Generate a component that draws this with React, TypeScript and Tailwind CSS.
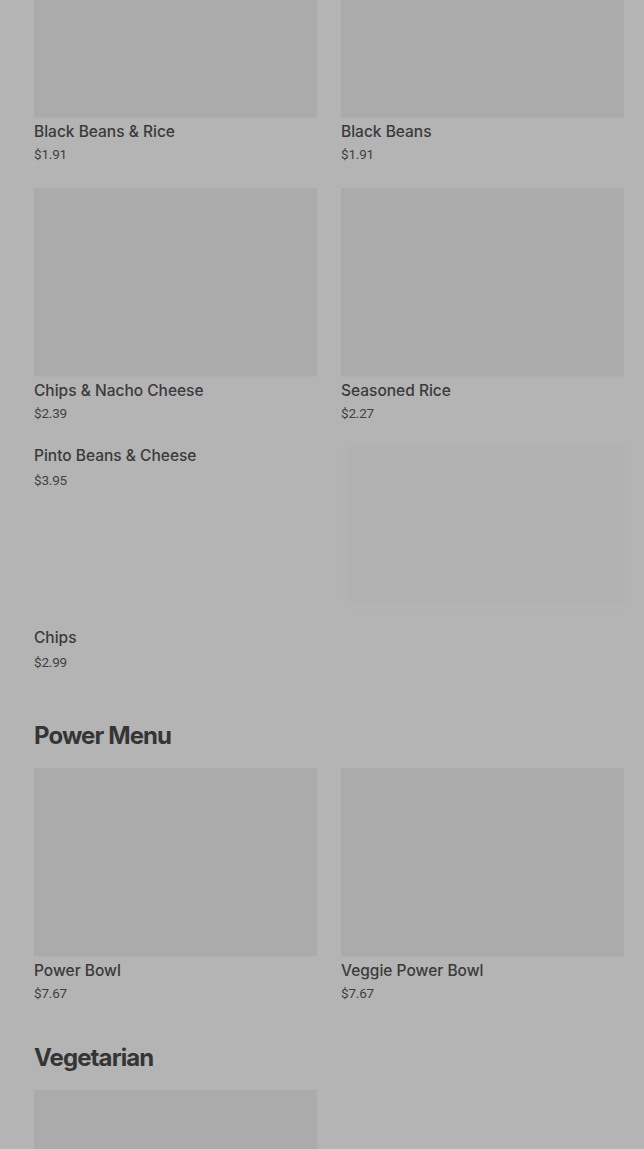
type Item = { name: string; price: string; image?: "full" | "faded" | "none" };

const sides: Item[] = [
  { name: "Black Beans & Rice", price: "$1.91" },
  { name: "Black Beans", price: "$1.91" },
  { name: "Chips & Nacho Cheese", price: "$2.39" },
  { name: "Seasoned Rice", price: "$2.27" },
  { name: "Pinto Beans & Cheese", price: "$3.95", image: "none" },
  { name: "", price: "", image: "faded" },
  { name: "Chips", price: "$2.99", image: "none" },
];

const power: Item[] = [
  { name: "Power Bowl", price: "$7.67" },
  { name: "Veggie Power Bowl", price: "$7.67" },
];

const veg: Item[] = [{ name: "", price: "" }];

function Card({ item }: { item: Item }) {
  const image = item.image ?? "full";
  if (image === "faded") {
    return (
      <div className="pb-[3px] pl-[7px]">
        <div className="h-[155px] bg-[#b1b1b1] shadow-[0_0_4px_2px_#b3b3b3]" />
      </div>
    );
  }
  const full = image === "full";
  return (
    <div className={`flex flex-col ${full ? "pb-[2px]" : ""}`}>
      {full && <div className="h-[188px] bg-[#ababab] shadow-[0_1px_0_#b0b0b0]" />}
      {item.name && (
        <div
          className={`${full ? "mt-[5px]" : "-mt-px"} text-[15.5px] leading-5 font-medium text-[#3a3a3a] [font-family:Inter,'Liberation_Sans',sans-serif]`}
        >
          {item.name}
        </div>
      )}
      {item.price && (
        <div className={`${full ? "mt-1" : "mt-[6px]"} text-[13.5px] leading-4 tracking-[-0.2px] text-[#414141]`}>
          {item.price}
        </div>
      )}
    </div>
  );
}

function Section({ title, items, first }: { title?: string; items: Item[]; first?: boolean }) {
  return (
    <section className={first ? "-mt-[71px]" : ""}>
      {title && (
        <h2 className="mb-[17px] text-[24px] leading-[30px] font-bold tracking-[-0.9px] text-[#353535] [font-family:Inter,'Liberation_Sans',sans-serif]">
          {title}
        </h2>
      )}
      <div className="grid grid-cols-2 gap-x-6 gap-y-6">
        {items.map((item, i) => (
          <Card key={i} item={item} />
        ))}
      </div>
    </section>
  );
}

export default function App() {
  return (
    <div className="min-h-[1149px] overflow-hidden bg-[#b4b4b4] pl-[34px] pr-[20px] [font-family:Roboto,'Liberation_Sans',sans-serif]">
      <Section items={sides} first />
      <div className="mt-[51px]">
        <Section title="Power Menu" items={power} />
      </div>
      <div className="mt-[40px]">
        <Section title="Vegetarian" items={veg} />
      </div>
    </div>
  );
}
